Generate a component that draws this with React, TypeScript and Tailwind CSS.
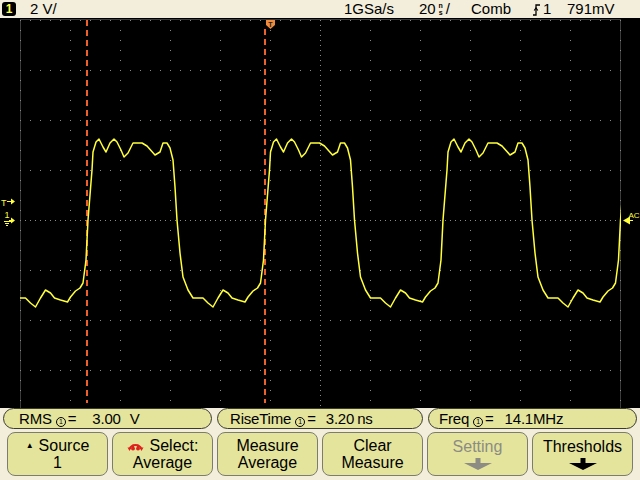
import React from 'react';

// one period of the trace, relative to the rising edge crossing
const shape: [number, number][] = [
  [0, 220], [4, 170], [5, 152], [8, 142], [11, 139], [15, 147], [18, 152], [22, 143], [26, 139],
  [29, 142], [33, 150], [36, 157], [40, 153], [45, 143], [54, 143], [59, 146], [67, 155], [72, 152],
  [75, 143], [79, 143], [82, 148], [85, 160], [87, 187], [89, 220], [92, 253], [95, 277], [100, 290],
  [105, 298], [115, 298], [120, 303], [125, 307], [130, 298], [135, 290], [140, 293], [144, 298],
  [150, 300], [157, 302], [160, 297], [165, 291], [169.5, 288], [172.5, 283], [175.5, 260],
];

function tracePoints() {
  const pts: string[] = [];
  for (let k = -1; k <= 3; k++) {
    const x0 = 88 + 177.5 * k;
    for (const [dx, y] of shape) pts.push(`${(x0 + dx).toFixed(1)},${y}`);
  }
  return pts.join(' ');
}

const vLines = Array.from({ length: 13 }, (_, i) => 20 + i * 50);
const hLines = Array.from({ length: 9 }, (_, i) => 20 + i * 50);

function dashes(x: number, from: number, to: number) {
  const out: React.ReactElement[] = [];
  for (let y = from; y < to; y += 10) {
    out.push(<rect key={x + '-' + y} x={x} y={y} width="2" height={Math.min(6, to - y)} fill="#f0602a" />);
  }
  return out;
}

function Circled() {
  return (
    <span className="inline-flex h-[10px] w-[10px] items-center justify-center rounded-full border border-black text-[7px] leading-none">
      1
    </span>
  );
}

function DownArrow({ color }: { color: string }) {
  return (
    <svg width="28" height="12" viewBox="0 0 28 12">
      <rect x="11.5" y="0" width="5" height="5" fill={color} />
      <polygon points="0,5 28,5 14,12" fill={color} />
    </svg>
  );
}

function Screen() {
  return (
    <svg width="640" height="390" viewBox="0 18 640 390" className="block">
      <defs>
        <clipPath id="grat">
          <rect x="20" y="20" width="601" height="400" />
        </clipPath>
      </defs>
      <rect x="20.5" y="19.5" width="600" height="400" fill="none" stroke="#3c3c3c" />
      {vLines.map((x) => (
        <line key={'v' + x} x1={x + 0.5} y1={20} x2={x + 0.5} y2={420} stroke="#8a8a8a"
          strokeDasharray={x === 320 ? '1 4' : '1 9'} shapeRendering="crispEdges" />
      ))}
      {hLines.map((y) => (
        <line key={'h' + y} x1={20} y1={y + 0.5} x2={621} y2={y + 0.5} stroke="#8a8a8a"
          strokeDasharray={y === 220 ? '1 4' : '1 9'} shapeRendering="crispEdges" />
      ))}
      {/* cursors */}
      {dashes(86, 20, 403)}
      {dashes(264, 29, 403)}
      <path d="M266 20 H275 V25 L270.5 29 L266 25 Z" fill="#f08a3c" />
      <text x="270.5" y="26.5" fontSize="7" fontWeight="bold" textAnchor="middle" fill="#222"
        fontFamily="Liberation Sans, Arial, sans-serif">T</text>
      {/* trace */}
      <polyline points={tracePoints()} fill="none" stroke="#ffff3a" strokeWidth="1.5"
        clipPath="url(#grat)" strokeLinejoin="round" />
      {/* left markers */}
      <g fill="#ffff3a" stroke="#ffff3a" fontFamily="Liberation Sans, Arial, sans-serif">
        <text x="1" y="206" fontSize="9" stroke="none">T</text>
        <line x1="7" y1="201.5" x2="12" y2="201.5" />
        <polygon points="11,198.5 15,201.5 11,204.5" stroke="none" />
        <text x="4.5" y="218" fontSize="9" stroke="none">1</text>
        <line x1="4" y1="221.5" x2="11" y2="221.5" />
        <line x1="5" y1="223.5" x2="9" y2="223.5" />
        <line x1="6" y1="225.5" x2="8" y2="225.5" />
        <line x1="9" y1="220.5" x2="12" y2="220.5" />
        <polygon points="11,217.5 15,220.5 11,223.5" stroke="none" />
        {/* right marker */}
        <polygon points="623,220.5 630,216.5 630,224.5" stroke="none" />
        <line x1="630" y1="220.5" x2="633" y2="220.5" />
        <text x="628.5" y="218" fontSize="8" stroke="none">AC</text>
      </g>
    </svg>
  );
}

export default function App() {
  return (
    <div className="flex h-[480px] w-[640px] flex-col overflow-hidden bg-[#f2eedb] font-['Liberation_Sans',Arial,sans-serif] text-black">
      {/* status bar */}
      <div className="flex h-[18px] items-center text-[15px] leading-[18px]">
        <div className="flex w-[344px] items-center">
          <div className="ml-[2px] flex h-[14px] w-[14px] items-center justify-center rounded-[3px] bg-black text-[12px] font-bold text-[#ffff40]">
            1
          </div>
          <span className="ml-[14px]">2 V/</span>
        </div>
        <span className="w-[75px]">1GSa/s</span>
        <span className="flex w-[52px] items-center">
          <span>20</span>
          <span className="mx-[2px] flex w-[6px] flex-col items-center text-[7px] font-bold leading-[7px]">
            <span>n</span>
            <span>s</span>
          </span>
          <span>/</span>
        </span>
        <span className="w-[61px]">Comb</span>
        <span className="flex w-[35px] items-center">
          <svg width="10" height="13" viewBox="0 0 10 13">
            <path d="M1 12 H4 V2 H8" fill="none" stroke="#000" strokeWidth="1.3" />
            <path d="M2.2 7.5 L4 5 L5.8 7.5" fill="none" stroke="#000" strokeWidth="1.2" />
          </svg>
          <span className="ml-[1px]">1</span>
        </span>
        <span>791mV</span>
      </div>

      {/* waveform area */}
      <div className="h-[390px] bg-black">
        <Screen />
      </div>

      {/* measurement bar */}
      <div className="flex h-[22px] gap-[5px] pl-[3px] text-[15px] leading-[19px] tracking-[-0.2px]">
        <div className="flex h-[21px] w-[209px] items-center rounded-[11px] border border-[#3a3a30] bg-[#e4e49c] pl-[15px]">
          <span>RMS</span>
          <span className="ml-[4px]"><Circled /></span>
          <span className="ml-[2px]">=</span>
          <span className="ml-[16px]">3.00</span>
          <span className="ml-[9px]">V</span>
        </div>
        <div className="flex h-[21px] w-[206px] items-center rounded-[11px] border border-[#3a3a30] bg-[#e4e49c] pl-[12px]">
          <span>RiseTime</span>
          <span className="ml-[4px]"><Circled /></span>
          <span className="ml-[2px]">=</span>
          <span className="ml-[10px]">3.20</span>
          <span className="ml-[3px]">ns</span>
        </div>
        <div className="flex h-[21px] w-[209px] items-center rounded-[11px] border border-[#3a3a30] bg-[#e4e49c] pl-[10px]">
          <span>Freq</span>
          <span className="ml-[4px]"><Circled /></span>
          <span className="ml-[2px]">=</span>
          <span className="ml-[11px]">14.1MHz</span>
        </div>
      </div>

      {/* softkeys */}
      <div className="flex gap-[4px] pl-[7px] pt-[2px] text-[16px] leading-[17px]">
        <div className="flex h-[44px] w-[101px] flex-col items-center justify-center rounded-[8px] border border-[#7c7c70] bg-[#e4e49c]">
          <span className="flex items-center">
            <span className="mr-[5px] text-[8px]">▲</span>Source
          </span>
          <span>1</span>
        </div>
        <div className="flex h-[44px] w-[101px] flex-col items-center justify-center rounded-[8px] border border-[#7c7c70] bg-[#e4e49c]">
          <span className="flex items-center">
            <svg width="17" height="13" viewBox="0 0 17 13" className="mr-[6px]">
              <path d="M2.5 10 A6.5 6.5 0 0 1 14.5 10" fill="none" stroke="#e0201c" strokeWidth="1.8" />
              <polygon points="0.5,8.5 4.5,8.5 2.5,12" fill="#e0201c" />
              <polygon points="12.5,8.5 16.5,8.5 14.5,12" fill="#e0201c" />
              <path d="M6 5 L4 9.5 A2 2 0 0 0 8 9.5 Z" fill="#e0201c" />
              <path d="M11 5 L9 9.5 A2 2 0 0 0 13 9.5 Z" fill="#e0201c" />
            </svg>
            Select:
          </span>
          <span>Average</span>
        </div>
        <div className="flex h-[44px] w-[101px] flex-col items-center justify-center rounded-[8px] border border-[#7c7c70] bg-[#e4e49c]">
          <span>Measure</span>
          <span>Average</span>
        </div>
        <div className="flex h-[44px] w-[101px] flex-col items-center justify-center rounded-[8px] border border-[#7c7c70] bg-[#e4e49c]">
          <span>Clear</span>
          <span>Measure</span>
        </div>
        <div className="flex h-[44px] w-[101px] flex-col items-center justify-center rounded-[8px] border border-[#7c7c70] bg-[#e4e49c] text-[#8c8c84]">
          <span>Setting</span>
          <span className="mt-[3px]"><DownArrow color="#8c8c84" /></span>
        </div>
        <div className="flex h-[44px] w-[101px] flex-col items-center justify-center rounded-[8px] border border-[#7c7c70] bg-[#e4e49c]">
          <span>Thresholds</span>
          <span className="mt-[3px]"><DownArrow color="#000" /></span>
        </div>
      </div>
    </div>
  );
}
